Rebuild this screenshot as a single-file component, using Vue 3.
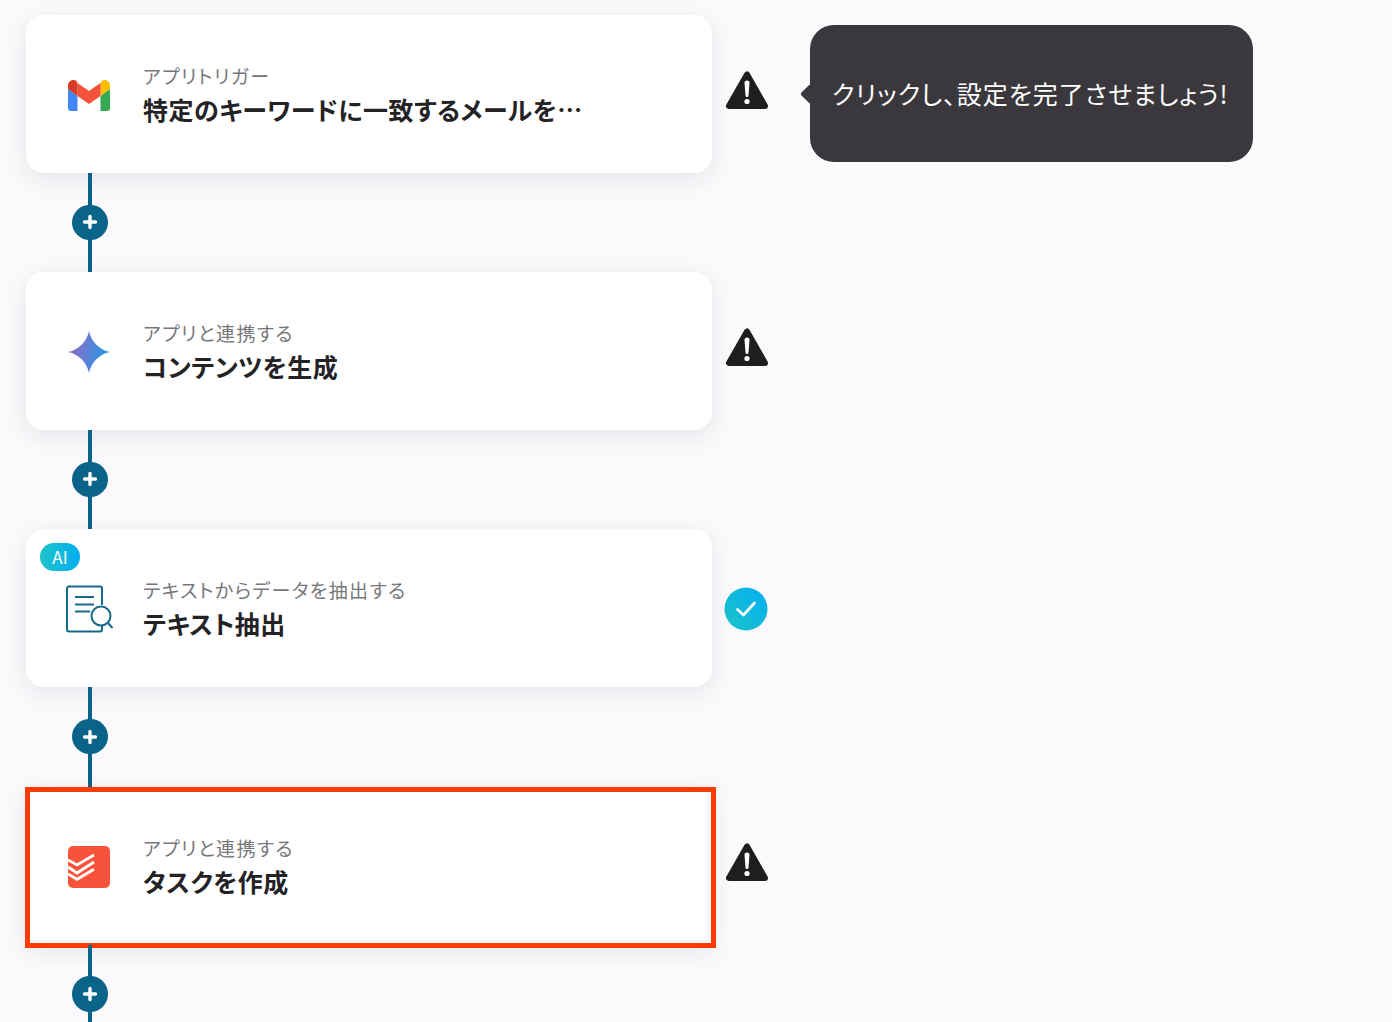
<script setup>
const steps = [
  { id: 1, icon: 'gmail', sub: 'アプリトリガー', title: '特定のキーワードに一致するメールを…', status: 'warn' },
  { id: 2, icon: 'gemini', sub: 'アプリと連携する', title: 'コンテンツを生成', status: 'warn' },
  { id: 3, icon: 'doc', sub: 'テキストからデータを抽出する', title: 'テキスト抽出', status: 'ok', ai: true },
  { id: 4, icon: 'todoist', sub: 'アプリと連携する', title: 'タスクを作成', status: 'warn', active: true }
]
</script>

<template>
  <div class="flow">
    <div v-for="step in steps" :key="step.id" class="step">
      <div class="row">
        <div class="card" :class="{ active: step.active }">
          <span v-if="step.ai" class="ai-badge">AI</span>
          <div class="icon">
            <svg v-if="step.icon === 'gmail'" width="42" height="31" viewBox="0 0 42 31">
              <path d="M0 9l9.500 7v15H3a3 3 0 0 1-3-3z" fill="#4285f4" />
              <path d="M32.500 16L42 9v19a3 3 0 0 1-3 3h-6.500z" fill="#34a853" />
              <path d="M32.500 4v12L42 9V5.500C42 1 37-1.500 33.500 1z" fill="#fbbc04" />
              <path d="M9.500 3v13L21 24l11.500-8V3L21 11z" fill="#f4523a" />
              <path d="M0 5.500V9l9.500 7V3L8.500 1C5-1.500 0 1 0 5.500z" fill="#d93a26" />
            </svg>
            <svg v-else-if="step.icon === 'gemini'" width="42" height="42" viewBox="0 0 42 42">
              <defs>
                <linearGradient id="gem" x1="0" y1="0.400" x2="1" y2="0.600">
                  <stop offset="0" stop-color="#9168c0" />
                  <stop offset="0.500" stop-color="#5b82d8" />
                  <stop offset="1" stop-color="#1a9ce0" />
                </linearGradient>
              </defs>
              <path d="M21 0C23 10 31 19 42 21 31 23 23 32 21 42 19 32 11 23 0 21 11 19 19 10 21 0z" fill="url(#gem)" />
            </svg>
            <svg v-else-if="step.icon === 'doc'" width="48" height="48" viewBox="0 0 48 48" fill="none" stroke="#16698a" stroke-width="2">
              <path d="M37 20V3.500a2 2 0 0 0-2-2H4a2 2 0 0 0-2 2v41a2 2 0 0 0 2 2h31a2 2 0 0 0 2-2V41" />
              <path d="M10 12h19M10 19.500h19M10 26.500h15" />
              <circle cx="36" cy="31" r="9.500" />
              <path d="M43 38l4.500 5" />
            </svg>
            <svg v-else width="42" height="42" viewBox="0 0 42 42">
              <rect width="42" height="42" rx="5" fill="#f8533a" />
              <path d="M0 14l9 5 17-10M0 21l9 6 17-11M0 28l9 5.300 17-10" fill="none" stroke="#fff" stroke-width="2.800" />
            </svg>
          </div>
          <div class="text">
            <p class="sub">{{ step.sub }}</p>
            <p class="title">{{ step.title }}</p>
          </div>
        </div>
        <div class="status" :class="step.status">
          <svg v-if="step.status === 'warn'" width="44" height="40" viewBox="0 0 44 40">
            <path d="M22 4.500L4 36h36z" fill="#1f1d20" stroke="#1f1d20" stroke-width="6" stroke-linejoin="round" />
            <path d="M19.500 13a2.500 2.500 0 0 1 5 0l-1 12.500a1.500 1.500 0 0 1-3 0z" fill="#fff" />
            <circle cx="22" cy="31.500" r="2.600" fill="#fff" />
          </svg>
          <svg v-else width="44" height="44" viewBox="0 0 44 44">
            <defs>
              <linearGradient id="okg" x1="0" y1="1" x2="1" y2="0">
                <stop offset="0" stop-color="#1dc4c9" />
                <stop offset="1" stop-color="#03aef0" />
              </linearGradient>
            </defs>
            <circle cx="22" cy="22" r="21.500" fill="url(#okg)" />
            <path d="M13.500 22.500l6 5.500L30.500 16" fill="none" stroke="#fff" stroke-width="2.600" stroke-linecap="round" stroke-linejoin="round" />
          </svg>
        </div>
      </div>
      <div class="link">
        <button class="add" type="button">
          <svg width="16" height="16" viewBox="0 0 16 16">
            <path d="M8 2.500v11M2.500 8h11" stroke="#fff" stroke-width="3.400" stroke-linecap="round" />
          </svg>
        </button>
      </div>
    </div>

    <div class="tooltip">クリックし、設定を完了させましょう!</div>
  </div>
</template>

<style>
html, body {
  margin: 0;
  background: #fbf9fc;
}
</style>

<style scoped>
.flow {
  position: relative;
  box-sizing: border-box;
  height: 1022px;
  overflow: hidden;
  padding: 15px 0 0 26px;
  font-family: "Noto Sans CJK JP", sans-serif;
  font-feature-settings: "palt";
  color: #232326;
}
.step {
  width: 760px;
}
.row {
  display: flex;
  align-items: center;
}
.card {
  position: relative;
  box-sizing: border-box;
  flex: 0 0 686px;
  height: 158px;
  display: flex;
  align-items: center;
  padding: 2px 0 0 39px;
  background: #fff;
  border-radius: 18px;
  box-shadow: 0 6px 24px rgba(40, 30, 60, 0.09);
}
.card.active {
  border-radius: 0;
}
.card.active::after {
  content: "";
  position: absolute;
  left: -1px;
  top: 0;
  box-sizing: border-box;
  width: 691px;
  height: 161px;
  border: 5px solid #fa3c02;
}
.icon {
  flex: 0 0 48px;
  display: flex;
  justify-content: center;
  margin-right: 30px;
}
.sub {
  margin: 0;
  font-size: 19px;
  line-height: 26px;
  letter-spacing: 1.4px;
  color: #77777b;
}
.title {
  margin: 3px 0 1px;
  font-size: 25px;
  line-height: 34px;
  font-weight: 700;
  letter-spacing: 0.5px;
  white-space: nowrap;
}
.ai-badge {
  position: absolute;
  left: 14px;
  top: 14px;
  width: 40px;
  height: 28px;
  border-radius: 14px;
  background: linear-gradient(90deg, #1dc4c9, #03aef0);
  color: #fff;
  font-size: 17px;
  line-height: 28px;
  text-align: center;
}
.status {
  margin-left: 13px;
  display: flex;
  margin-top: -8px;
}
.status.ok {
  margin-left: 12px;
  margin-top: 2px;
}
.link {
  position: relative;
  width: 4px;
  height: 99.2px;
  margin-left: 62px;
  background: #0a6389;
}
.add {
  position: absolute;
  left: -16px;
  top: 31.500px;
  box-sizing: border-box;
  width: 35.500px;
  height: 35.500px;
  padding: 0;
  border: 0;
  border-radius: 50%;
  background: #0a6389;
  display: flex;
  align-items: center;
  justify-content: center;
}
.tooltip {
  position: absolute;
  left: 810px;
  top: 25px;
  box-sizing: border-box;
  width: 443px;
  height: 137px;
  display: flex;
  align-items: center;
  padding: 0 0 2px 22px;
  border-radius: 24px;
  background: #3a383c;
  color: #fff;
  font-size: 25px;
  letter-spacing: 1px;
  white-space: nowrap;
}
.tooltip::before {
  content: "";
  position: absolute;
  left: -7px;
  top: 62px;
  width: 14px;
  height: 14px;
  background: #3a383c;
  border-radius: 2px;
  transform: rotate(45deg);
}
</style>
